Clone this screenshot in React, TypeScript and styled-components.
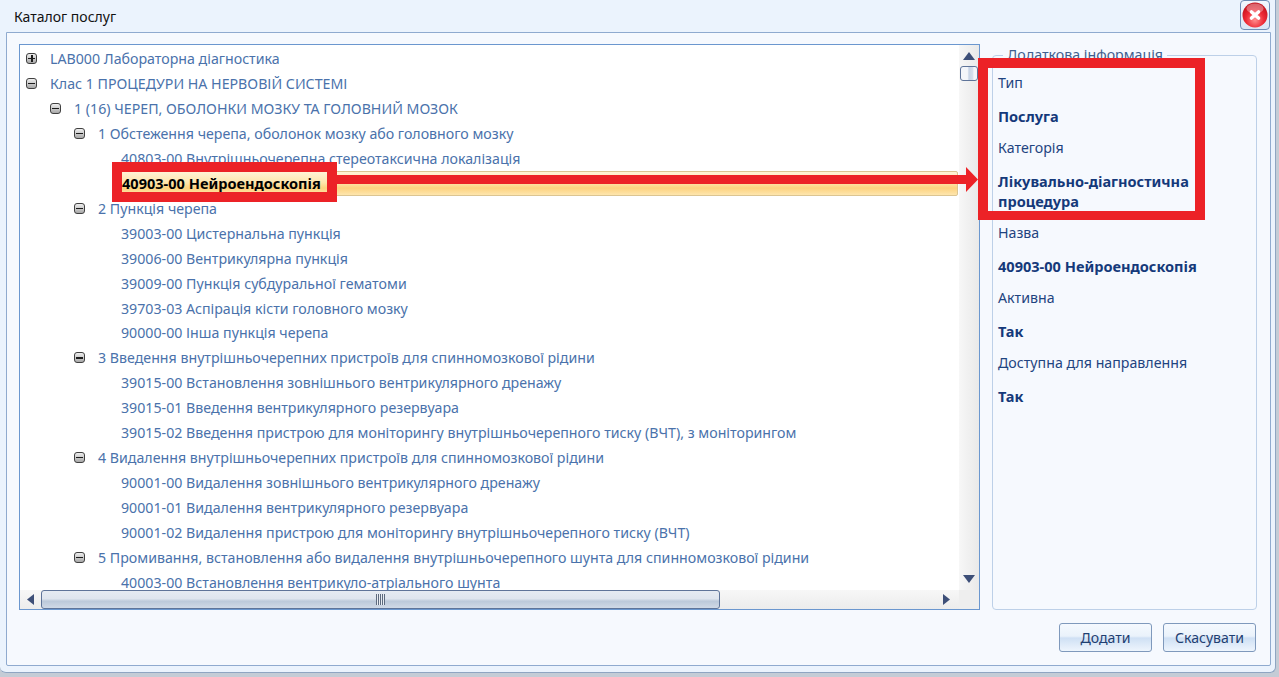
import React from 'react';
import { createGlobalStyle, styled } from 'styled-components';

const GlobalStyle = createGlobalStyle`
  html, body {
    margin: 0;
    height: 100%;
    overflow: hidden;
    background: #c4ccd6;
    font-family: "Noto Sans", "Open Sans", "Liberation Sans", sans-serif;
  }
`;

const Page = styled.div`
  position: relative;
  width: 1279px;
  height: 677px;
  overflow: hidden;
`;

const Dialog = styled.div`
  box-sizing: border-box;
  width: 1276px;
  height: 673px;
  display: flex;
  flex-direction: column;
  padding: 0 4px 6px 6px;
  background: #ebf3fd;
  border-bottom: 1px solid #8fa5c2;
  border-right: 1px solid #8fa5c2;
  border-radius: 0 0 6px 6px;
`;

const TitleBar = styled.div`
  flex: 0 0 32px;
  display: flex;
  align-items: flex-start;
  justify-content: space-between;
`;

const Title = styled.div`
  margin: 7px 0 0 8px;
  font-size: 14px;
  line-height: 20px;
  color: #111;
`;

const CloseButton = styled.button`
  box-sizing: border-box;
  width: 30px;
  height: 30px;
  margin-right: 1px;
  padding: 0;
  display: flex;
  align-items: center;
  justify-content: center;
  background: linear-gradient(#f3f8fe, #d9e6f6);
  border: 1px solid #6f8db5;
  border-radius: 4px;
`;

const Content = styled.div`
  box-sizing: border-box;
  flex: 1;
  display: flex;
  flex-direction: column;
  padding: 11px 13px 13px 12px;
  background: #f6f9fe;
  border: 1px solid #8faacf;
  border-radius: 0 0 2px 2px;
`;

const Panels = styled.div`
  display: flex;
  gap: 12px;
`;

const TreePanel = styled.div`
  box-sizing: border-box;
  width: 961px;
  height: 566px;
  display: grid;
  grid-template-columns: 1fr 20px;
  grid-template-rows: 1fr 19px;
  background: #fff;
  border: 1px solid #6b97cf;
`;

const TreeList = styled.div`
  overflow: hidden;
  padding-top: 1.2px;
`;

const Row = styled.div<{ $level: number; $selected?: boolean }>`
  box-sizing: border-box;
  height: 24.95px;
  display: flex;
  align-items: center;
  padding-left: ${p => 6 + p.$level * 24}px;
  font-size: ${p => (p.$selected ? 14.55 : 14.2)}px;
  font-weight: ${p => (p.$selected ? 700 : 400)};
  color: ${p => (p.$selected ? '#000' : '#4a72ab')};
  white-space: nowrap;
`;

const LeafRow = styled(Row)`
  padding-left: 101px;
`;

const SelectedRow = styled(LeafRow)`
  margin-left: 96px;
  margin-right: 1px;
  padding-left: 5px;
  background: linear-gradient(#fff3d6 0%, #fee6ae 45%, #fdd27f 70%, #fee6ae 100%);
  border: 1px solid #dcc592;
  border-radius: 2px;
`;

const Expander = styled.span`
  box-sizing: border-box;
  flex: none;
  width: 11px;
  height: 11px;
  margin-right: 13px;
  display: flex;
  align-items: center;
  justify-content: center;
  background: linear-gradient(#efefef, #a8a8a8);
  border: 1px solid #404040;
  border-radius: 3px;
`;

const ExpanderMark = styled.span<{ $open: boolean }>`
  display: block;
  width: 7px;
  height: 1.5px;
  background: #1c1c1c;
  &::after {
    content: '';
    display: ${p => (p.$open ? 'none' : 'block')};
    width: 1.5px;
    height: 7px;
    margin: -3px 0 0 3px;
    background: #1c1c1c;
  }
`;

const VScroll = styled.div`
  display: flex;
  flex-direction: column;
  align-items: center;
  background: linear-gradient(90deg, #f7f7f7, #e9e9e9);
`;

const VThumb = styled.div`
  box-sizing: border-box;
  width: 18px;
  height: 15px;
  margin-top: 6px;
  background: linear-gradient(90deg, #f4f6fa 40%, #c8d4e6 50%, #d8e0ec 75%, #f4f6fa 80%);
  border: 1px solid #5f7499;
  border-radius: 3px;
`;

const Arrow = styled.svg`
  flex: none;
  display: block;
  fill: #3d4f78;
`;

const DownArrow = styled(Arrow)`
  margin-top: auto;
  margin-bottom: 7px;
`;

const UpArrow = styled(Arrow)`
  margin-top: 7px;
`;

const HScroll = styled.div`
  grid-column: 1 / 2;
  display: flex;
  align-items: center;
  padding: 0 9px 0 7px;
  background: linear-gradient(#f7f7f7, #ececec);
`;

const HThumb = styled.div`
  box-sizing: border-box;
  width: 679px;
  height: 19px;
  margin-left: 7px;
  display: flex;
  align-items: center;
  justify-content: center;
  background: linear-gradient(#e6ebf2 0%, #dfe5ee 45%, #bcc9da 60%, #d0d9e6 100%);
  border: 1px solid #5f7499;
  border-radius: 3px;
`;

const Grip = styled.div`
  width: 9px;
  height: 11px;
  background: repeating-linear-gradient(90deg, #5d6a7e 0 1px, #e8ecf2 1px 2px);
`;

const Corner = styled.div`
  background: #eeeeee;
`;

const RightArrow = styled(Arrow)`
  margin-left: auto;
`;

const InfoGroup = styled.fieldset`
  box-sizing: border-box;
  width: 265px;
  height: 564px;
  margin: 2px 0 0;
  padding: 0 5px;
  border: 1px solid #bdd0e8;
  border-radius: 4px;
  background: #f6f9fe;
`;

const InfoLegend = styled.legend`
  margin-left: 5px;
  padding: 0 4px;
  font-size: 14.2px;
  line-height: 18px;
  color: #3f5f8f;
`;

const InfoList = styled.div`
  display: flex;
  flex-direction: column;
  gap: 12.5px;
  margin-top: 9px;
`;

const InfoLine = styled.div<{ $value?: boolean }>`
  font-size: ${p => (p.$value ? 14.55 : 14.2)}px;
  line-height: 20px;
  font-weight: ${p => (p.$value ? 700 : 400)};
  color: ${p => (p.$value ? '#15397a' : '#1f4480')};
`;

const Footer = styled.div`
  display: flex;
  justify-content: flex-end;
  gap: 11px;
  margin-top: 13px;
  margin-right: 1px;
`;

const FooterButton = styled.button`
  box-sizing: border-box;
  width: 93px;
  height: 29px;
  padding: 0;
  font-family: inherit;
  font-size: 14.1px;
  color: #1f3f72;
  background: linear-gradient(#f5f9fe 0%, #eaf2fb 45%, #cfe0f4 52%, #eef5fd 100%);
  border: 1px solid #7f99bc;
  border-radius: 3px;
`;

const Callout = styled.div`
  position: absolute;
  box-sizing: border-box;
  border: 10px solid #ec2227;
`;

const RowCallout = styled(Callout)`
  left: 112px;
  top: 162px;
  width: 225px;
  height: 40px;
`;

const InfoCallout = styled(Callout)`
  left: 978px;
  top: 58px;
  width: 227px;
  height: 162px;
  border-bottom-width: 9px;
`;

const CalloutArrow = styled.svg`
  position: absolute;
  left: 337px;
  top: 167px;
  fill: #ec2227;
`;

type Node = { text: string; level: number; kind: 'open' | 'closed' | 'leaf' | 'selected' };

const tree: Node[] = [
  { text: 'LAB000 Лабораторна діагностика', level: 0, kind: 'closed' },
  { text: 'Клас 1 ПРОЦЕДУРИ НА НЕРВОВІЙ СИСТЕМІ', level: 0, kind: 'open' },
  { text: '1 (16) ЧЕРЕП, ОБОЛОНКИ МОЗКУ ТА ГОЛОВНИЙ МОЗОК', level: 1, kind: 'open' },
  { text: '1 Обстеження черепа, оболонок мозку або головного мозку', level: 2, kind: 'open' },
  { text: '40803-00 Внутрішньочерепна стереотаксична локалізація', level: 3, kind: 'leaf' },
  { text: '40903-00 Нейроендоскопія', level: 3, kind: 'selected' },
  { text: '2 Пункція черепа', level: 2, kind: 'open' },
  { text: '39003-00 Цистернальна пункція', level: 3, kind: 'leaf' },
  { text: '39006-00 Вентрикулярна пункція', level: 3, kind: 'leaf' },
  { text: '39009-00 Пункція субдуральної гематоми', level: 3, kind: 'leaf' },
  { text: '39703-03 Аспірація кісти головного мозку', level: 3, kind: 'leaf' },
  { text: '90000-00 Інша пункція черепа', level: 3, kind: 'leaf' },
  { text: '3 Введення внутрішньочерепних пристроїв для спинномозкової рідини', level: 2, kind: 'open' },
  { text: '39015-00 Встановлення зовнішнього вентрикулярного дренажу', level: 3, kind: 'leaf' },
  { text: '39015-01 Введення вентрикулярного резервуара', level: 3, kind: 'leaf' },
  { text: '39015-02 Введення пристрою для моніторингу внутрішньочерепного тиску (ВЧТ), з моніторингом', level: 3, kind: 'leaf' },
  { text: '4 Видалення внутрішньочерепних пристроїв для спинномозкової рідини', level: 2, kind: 'open' },
  { text: '90001-00 Видалення зовнішнього вентрикулярного дренажу', level: 3, kind: 'leaf' },
  { text: '90001-01 Видалення вентрикулярного резервуара', level: 3, kind: 'leaf' },
  { text: '90001-02 Видалення пристрою для моніторингу внутрішньочерепного тиску (ВЧТ)', level: 3, kind: 'leaf' },
  { text: '5 Промивання, встановлення або видалення внутрішньочерепного шунта для спинномозкової рідини', level: 2, kind: 'open' },
  { text: '40003-00 Встановлення вентрикуло-атріального шунта', level: 3, kind: 'leaf' },
];

const info = [
  { label: 'Тип', value: 'Послуга' },
  { label: 'Категорія', value: 'Лікувально-діагностична процедура' },
  { label: 'Назва', value: '40903-00 Нейроендоскопія' },
  { label: 'Активна', value: 'Так' },
  { label: 'Доступна для направлення', value: 'Так' },
];

const CloseIcon = () => (
  <svg width="26" height="26" viewBox="0 0 26 26">
    <defs>
      <radialGradient id="ball" cx="50%" cy="70%" r="65%">
        <stop offset="0%" stopColor="#ff8f8f" />
        <stop offset="55%" stopColor="#ee2a36" />
        <stop offset="100%" stopColor="#c4101c" />
      </radialGradient>
    </defs>
    <circle cx="13" cy="13" r="12.5" fill="url(#ball)" />
    <ellipse cx="13" cy="6.5" rx="8.5" ry="5" fill="#fff" opacity="0.35" />
    <path d="M9.5 10l7 6M16.5 10l-7 6" stroke="#fff" strokeWidth="3.6" strokeLinecap="round" />
  </svg>
);

const TreeRow = ({ node }: { node: Node }) => {
  if (node.kind === 'selected') {
    return <SelectedRow $level={node.level} $selected>{node.text}</SelectedRow>;
  }
  if (node.kind === 'leaf') {
    return <LeafRow $level={node.level}>{node.text}</LeafRow>;
  }
  return (
    <Row $level={node.level}>
      <Expander>
        <ExpanderMark $open={node.kind === 'open'} />
      </Expander>
      {node.text}
    </Row>
  );
};

export default function App() {
  return (
    <Page>
      <GlobalStyle />
      <Dialog>
        <TitleBar>
          <Title>Каталог послуг</Title>
          <CloseButton aria-label="Закрити">
            <CloseIcon />
          </CloseButton>
        </TitleBar>
        <Content>
          <Panels>
            <TreePanel>
              <TreeList>
                {tree.map(node => (
                  <TreeRow key={node.text} node={node} />
                ))}
              </TreeList>
              <VScroll>
                <UpArrow width="12" height="8" viewBox="0 0 12 8">
                  <path d="M6 0l6 8H0z" />
                </UpArrow>
                <VThumb />
                <DownArrow width="12" height="8" viewBox="0 0 12 8">
                  <path d="M0 0h12L6 8z" />
                </DownArrow>
              </VScroll>
              <HScroll>
                <Arrow width="7" height="11" viewBox="0 0 7 11">
                  <path d="M7 0v11L0 5.5z" />
                </Arrow>
                <HThumb>
                  <Grip />
                </HThumb>
                <RightArrow width="7" height="11" viewBox="0 0 7 11">
                  <path d="M0 0l7 5.5L0 11z" />
                </RightArrow>
              </HScroll>
              <Corner />
            </TreePanel>
            <InfoGroup>
              <InfoLegend>Додаткова інформація</InfoLegend>
              <InfoList>
                {info.map(item => (
                  <React.Fragment key={item.label}>
                    <InfoLine>{item.label}</InfoLine>
                    <InfoLine $value>{item.value}</InfoLine>
                  </React.Fragment>
                ))}
              </InfoList>
            </InfoGroup>
          </Panels>
          <Footer>
            <FooterButton>Додати</FooterButton>
            <FooterButton>Скасувати</FooterButton>
          </Footer>
        </Content>
      </Dialog>
      <RowCallout />
      <InfoCallout />
      <CalloutArrow width="641" height="25" viewBox="0 0 641 25">
        <path d="M0 8h629V0l12 12.5L629 25v-8H0z" />
      </CalloutArrow>
    </Page>
  );
}
